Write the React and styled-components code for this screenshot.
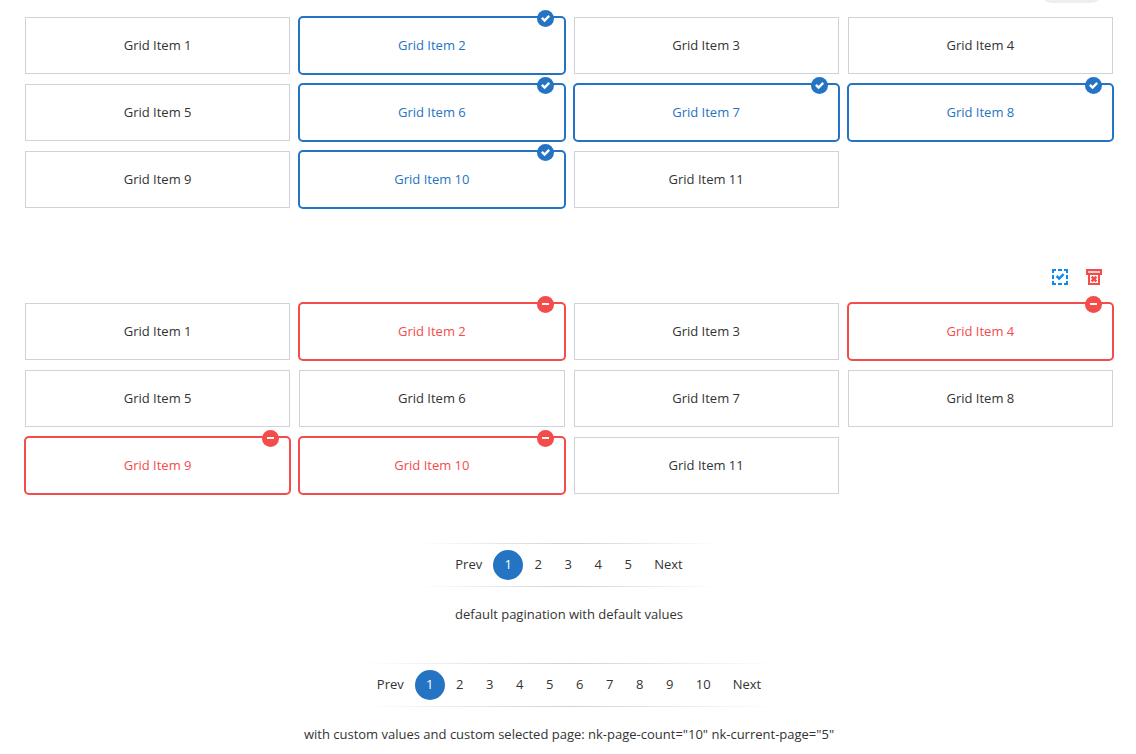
import React, { useState } from "react";
import styled, { createGlobalStyle, css } from "styled-components";

const GlobalStyle = createGlobalStyle`
  *, *::before, *::after { box-sizing: border-box; }
  body {
    margin: 0;
    background: #fff;
    color: #333;
    font: 13px/20px "Open Sans", "Noto Sans", sans-serif;
  }
  button { font: inherit; color: inherit; cursor: pointer; }
`;

const tones = { select: "#2574c4", remove: "#f34c4b" };

const Page = styled.main`
  padding: 0 23px 10px 25px;
`;

const TopBar = styled.div`
  display: flex;
  justify-content: flex-end;
  height: 17px;
  padding-right: 15px;
`;

const Pill = styled.span`
  width: 53px;
  height: 3px;
  background: #eee;
  border-radius: 0 0 8px 8px / 0 0 3px 3px;
`;

const Toolbar = styled.div`
  display: flex;
  justify-content: flex-end;
  gap: 18px;
  margin-top: 61px;
  padding: 0 11px 18px 0;
`;

const IconButton = styled.button`
  display: block;
  width: 16px;
  height: 16px;
  padding: 0;
  border: 0;
  background: none;
  svg { display: block; }
`;

const Grid = styled.div`
  display: grid;
  grid-template-columns: repeat(4, 1fr);
  grid-auto-rows: 57px;
  gap: 10px 9px;
`;

const Item = styled.button`
  position: relative;
  padding: 0 0 2px;
  background: #fff;
  border: 1px solid #cfd2d9;
  ${(p) =>
    p.$tone &&
    css`
      margin: -1px;
      color: ${p.$tone};
      border: 2px solid ${p.$tone};
      border-radius: 5px;
    `}
`;

const Badge = styled.svg`
  position: absolute;
  top: -8px;
  right: 10px;
`;

const PagerBlock = styled.section`
  display: flex;
  flex-direction: column;
  align-items: center;
  gap: 17px;
  margin-top: ${(p) => (p.$first ? 49 : 39)}px;
`;

const Pager = styled.nav`
  display: flex;
  justify-content: center;
  min-width: 300px;
  padding: 7px 4px;
  --line: linear-gradient(to right, transparent, #cfd2d9 50%, transparent);
  background: var(--line) top / 100% 1px no-repeat, var(--line) bottom / 100% 1px no-repeat;
`;

const PageButton = styled.button`
  min-width: 30px;
  height: 30px;
  padding: 0 11px 2px;
  border: 0;
  border-radius: 15px;
  background: none;
  ${(p) =>
    p.$current &&
    css`
      color: #fff;
      background: ${tones.select};
    `}
`;

const Caption = styled.p`
  margin: 0;
`;

function Mark({ mode }) {
  return (
    <Badge width="17" height="17" viewBox="0 0 17 17" aria-hidden="true">
      <circle cx="8.5" cy="8.5" r="8.5" fill={tones[mode]} />
      {mode === "select" ? (
        <path d="M4.9 7.8 7.6 10.5 12.2 5.9" fill="none" stroke="#fff" strokeWidth="2.4" />
      ) : (
        <path d="M5 7h7v2H5z" fill="#fff" />
      )}
    </Badge>
  );
}

function SelectableGrid({ mode, initial }) {
  const [selected, setSelected] = useState(initial);
  const toggle = (n) =>
    setSelected((s) => (s.includes(n) ? s.filter((v) => v !== n) : [...s, n]));
  return (
    <Grid>
      {Array.from({ length: 11 }, (_, i) => i + 1).map((n) => {
        const on = selected.includes(n);
        return (
          <Item key={n} type="button" aria-pressed={on} $tone={on && tones[mode]} onClick={() => toggle(n)}>
            Grid Item {n}
            {on && <Mark mode={mode} />}
          </Item>
        );
      })}
    </Grid>
  );
}

function Pagination({ count, label }) {
  const [current, setCurrent] = useState(1);
  return (
    <Pager aria-label={label}>
      <PageButton type="button" onClick={() => setCurrent(Math.max(1, current - 1))}>Prev</PageButton>
      {Array.from({ length: count }, (_, i) => i + 1).map((n) => (
        <PageButton
          key={n}
          type="button"
          $current={n === current}
          aria-current={n === current ? "page" : undefined}
          onClick={() => setCurrent(n)}
        >
          {n}
        </PageButton>
      ))}
      <PageButton type="button" onClick={() => setCurrent(Math.min(count, current + 1))}>Next</PageButton>
    </Pager>
  );
}

export default function App() {
  return (
    <>
      <GlobalStyle />
      <Page>
        <TopBar><Pill /></TopBar>
        <SelectableGrid mode="select" initial={[2, 6, 7, 8, 10]} />
        <Toolbar>
          <IconButton type="button" aria-label="Select all">
            <svg width="16" height="16" viewBox="0 0 16 16" fill="none" stroke="#0d8bf0" strokeWidth="2">
              <path d="M0 1h4M6 1h4M12 1h4M0 15h4M6 15h4M12 15h4M1 0v4M1 6v4M1 12v4M15 0v4M15 6v4M15 12v4" />
              <path d="M4.6 7 7.2 9.6 11.6 5.2" strokeWidth="2.5" />
            </svg>
          </IconButton>
          <IconButton type="button" aria-label="Remove selected">
            <svg width="16" height="16" viewBox="0 0 16 16" fill="none" stroke="#f34c4b" strokeWidth="2">
              <path d="M1 1h14v4H1z" fill="#fbc9c9" />
              <path d="M3 5v10h10V5" />
              <path d="M5.6 7.6l4.8 4.8M10.4 7.6l-4.8 4.8" strokeWidth="2.6" />
            </svg>
          </IconButton>
        </Toolbar>
        <SelectableGrid mode="remove" initial={[2, 4, 9, 10]} />
        <PagerBlock $first>
          <Pagination count={5} label="Default pagination" />
          <Caption>default pagination with default values</Caption>
        </PagerBlock>
        <PagerBlock>
          <Pagination count={10} label="Custom pagination" />
          <Caption>with custom values and custom selected page: nk-page-count="10" nk-current-page="5"</Caption>
        </PagerBlock>
      </Page>
    </>
  );
}
